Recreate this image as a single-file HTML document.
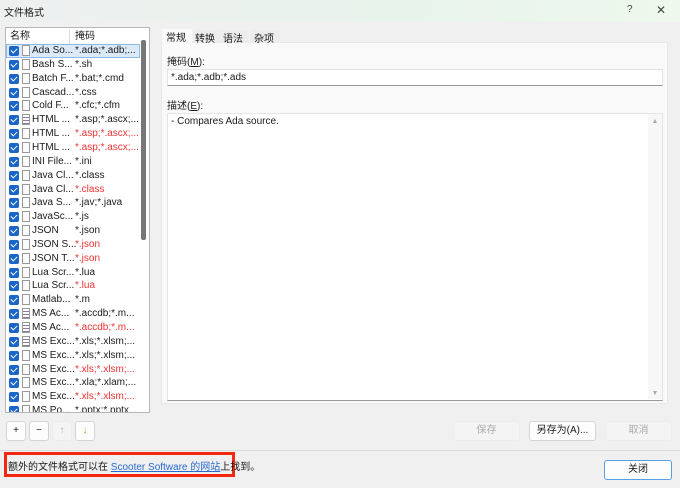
<!DOCTYPE html>
<html><head><meta charset="utf-8"><style>
*{box-sizing:border-box;margin:0;padding:0}
body{width:680px;height:488px;background:#f0f0f0;font-family:"Liberation Sans","Noto Sans CJK SC",sans-serif;font-size:10px;color:#1a1a1a;position:relative;overflow:hidden}
.a{position:absolute}
.title{left:0;top:0;width:680px;height:22px;background:linear-gradient(90deg,#eef0f0,#e8f3ec 60%,#eef8ec)}
.list{left:5px;top:27px;width:145px;height:386px;background:#fff;border:1px solid #b8b8b8;overflow:hidden}
.row{position:absolute;left:0;width:134px;height:14px;line-height:14px;white-space:nowrap}
.cb{position:absolute;left:3px;top:2px;width:10px;height:10px;background:#1a66c8;border-radius:2px}
.cb:after{content:"";position:absolute;left:3px;top:1px;width:3px;height:5px;border:solid #fff;border-width:0 1.3px 1.3px 0;transform:rotate(45deg)}
.ic{position:absolute;left:16px;top:1px;width:8px;height:11px;border:1px solid #999;background:#fafafa}
.ic.t{background:repeating-linear-gradient(#fff 0 2px,#8a7aa0 2px 3px)}
.n{position:absolute;left:26px}
.m{position:absolute;left:69px}
.r{color:#e33}
.btn{position:absolute;height:20px;border:1px solid #d4d4d4;background:#fdfdfd;border-radius:3px;text-align:center;line-height:18px}
.dis{background:#f4f4f4;color:#aaa;border-color:#ececec}
</style></head><body>
<div class="a title"><span class="a" style="left:4px;top:4px">文件格式</span><span class="a" style="left:627px;top:4px;color:#444">?</span><span class="a" style="left:656px;top:3px;color:#444;font-size:12px">✕</span></div>
<div class="a list">
<div class="a" style="left:0;top:2px;width:134px;height:14px;line-height:14px"><span class="a" style="left:4px">名称</span><span class="a" style="left:63px;top:0;width:1px;height:14px;background:#ddd"></span><span class="a" style="left:69px">掩码</span></div>
<div class="a" style="left:135px;top:12px;width:5px;height:200px;background:#777;border-radius:2px"></div>
<div class="row" style="top:16px;background:#dceaf8;border:1px solid #8cbbe8"></div>
<script>
var d=[["Ada So...","*.ada;*.adb;...",0],["Bash S...","*.sh",0],["Batch F...","*.bat;*.cmd",0],["Cascad...","*.css",0],["Cold F...","*.cfc;*.cfm",0],["HTML ...","*.asp;*.ascx;...",0,1],["HTML ...","*.asp;*.ascx;...",1],["HTML ...","*.asp;*.ascx;...",1],["INI File...","*.ini",0],["Java Cl...","*.class",0],["Java Cl...","*.class",1],["Java S...","*.jav;*.java",0],["JavaSc...","*.js",0],["JSON","*.json",0],["JSON S...","*.json",1],["JSON T...","*.json",1],["Lua Scr...","*.lua",0],["Lua Scr...","*.lua",1],["Matlab...","*.m",0],["MS Ac...","*.accdb;*.m...",0,1],["MS Ac...","*.accdb;*.m...",1,1],["MS Exc...","*.xls;*.xlsm;...",0,1],["MS Exc...","*.xls;*.xlsm;...",0],["MS Exc...","*.xls;*.xlsm;...",1],["MS Exc...","*.xla;*.xlam;...",0],["MS Exc...","*.xls;*.xlsm;...",1],["MS Po...","*.pptx;*.pptx...",0]];
var h="";d.forEach(function(r,i){h+='<div class="row" style="top:'+(16+i*13.85)+'px"><span class="cb"></span><span class="ic'+(r[3]?' t':'')+'"></span><span class="n">'+r[0]+'</span><span class="m'+(r[2]?' r':'')+'">'+r[1]+'</span></div>'});document.write(h);
</script>
</div>
<div class="a" style="left:161px;top:42px;width:507px;height:362px;background:#f9f9f9;border:1px solid #e8e8e8"></div>
<div class="a" style="left:162px;top:29px;width:30px;height:14px;background:#f9f9f9;padding-left:4px">常规</div>
<span class="a" style="left:194px;top:30px;background:#ececec;width:26px;height:13px;padding-left:1px">转换</span>
<span class="a" style="left:222px;top:30px;background:#ececec;width:26px;height:13px;padding-left:1px">语法</span>
<span class="a" style="left:250px;top:30px;background:#ececec;width:30px;height:13px;padding-left:4px">杂项</span>
<span class="a" style="left:167px;top:53px">掩码(<u>M</u>):</span>
<div class="a" style="left:167px;top:69px;width:496px;height:17px;background:#fff;border:1px solid #e4e4e4;border-bottom-color:#999;padding:2px 3px">*.ada;*.adb;*.ads</div>
<span class="a" style="left:167px;top:97px">描述(<u>E</u>):</span>
<div class="a" style="left:167px;top:113px;width:496px;height:288px;background:#fff;border:1px solid #e4e4e4;border-bottom-color:#999;padding:2px 3px">- Compares Ada source.<div class="a" style="left:480px;top:0;width:14px;height:285px;background:#f7f7f7;color:#aaa;font-size:7px;text-align:center;padding-top:4px">▲<div class="a" style="left:0;bottom:2px;width:14px">▼</div></div></div>
<div class="btn" style="left:6px;top:421px;width:20px">+</div>
<div class="btn" style="left:29px;top:421px;width:20px">−</div>
<div class="btn dis" style="left:52px;top:421px;width:20px">↑</div>
<div class="btn" style="left:75px;top:421px;width:20px;color:#c8902a">↓</div>
<div class="btn dis" style="left:453px;top:421px;width:67px">保存</div>
<div class="btn" style="left:529px;top:421px;width:67px">另存为(A)...</div>
<div class="btn dis" style="left:605px;top:421px;width:67px">取消</div>
<div class="a" style="left:0;top:450px;width:680px;height:1px;background:#dcdcdc"></div>
<div class="a" style="left:4px;top:452px;width:231px;height:25px;border:3px solid #f22810"></div>
<span class="a" style="left:8px;top:458px">额外的文件格式可以在 <span style="color:#2a6ad0;text-decoration:underline">Scooter Software 的网站</span>上找到。</span>
<div class="btn" style="left:604px;top:460px;width:68px;border-color:#5a9ee8">关闭</div>
</body></html>
